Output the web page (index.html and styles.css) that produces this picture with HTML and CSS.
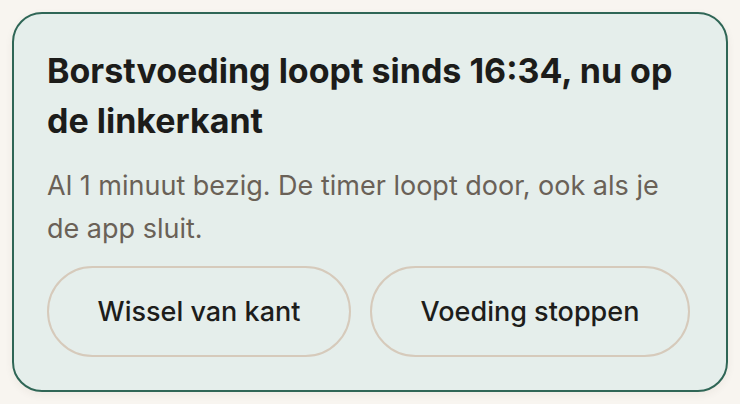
FILE: index.html
```html
<!DOCTYPE html>
<html lang="nl">
<head>
<meta charset="utf-8">
<title>Borstvoeding</title>
<link rel="stylesheet" href="styles.css">
</head>
<body>
<section class="card">
  <h1 class="title">Borstvoeding loopt sinds 16:34, nu op de linkerkant</h1>
  <p class="desc">Al 1 minuut bezig. De timer loopt door, ook als je de app sluit.</p>
  <div class="actions">
    <button class="btn">Wissel van kant</button>
    <button class="btn">Voeding stoppen</button>
  </div>
</section>
</body>
</html>
```

FILE: styles.css
```css
html, body {
  margin: 0;
  padding: 0;
  background: #f8f5f0;
}
body {
  padding: 12px;
  font-family: Inter, "Noto Sans", "Liberation Sans", sans-serif;
}
.card {
  box-sizing: border-box;
  width: 716px;
  background: #e5eeeb;
  border: 2px solid #2f6656;
  border-radius: 30px;
  padding: 32px 36px 33px 33px;
  box-shadow: 0 3px 8px rgba(60, 50, 30, 0.06);
}
.title {
  margin: 0;
  font-size: 34px;
  line-height: 50px;
  font-weight: 700;
  letter-spacing: 0;
  color: #1c1c1a;
}
.desc {
  margin: 18px 0 0;
  font-size: 27px;
  line-height: 43px;
  font-weight: 400;
  color: #6a6157;
}
.actions {
  display: flex;
  gap: 19px;
  margin-top: 16px;
}
.btn {
  box-sizing: border-box;
  flex: 1 1 auto;
  height: 91px;
  padding: 0 40px;
  background: transparent;
  border: 2px solid #d6cabb;
  border-radius: 46px;
  font-family: inherit;
  font-size: 27px;
  font-weight: 500;
  color: #1d1d1b;
}
```
